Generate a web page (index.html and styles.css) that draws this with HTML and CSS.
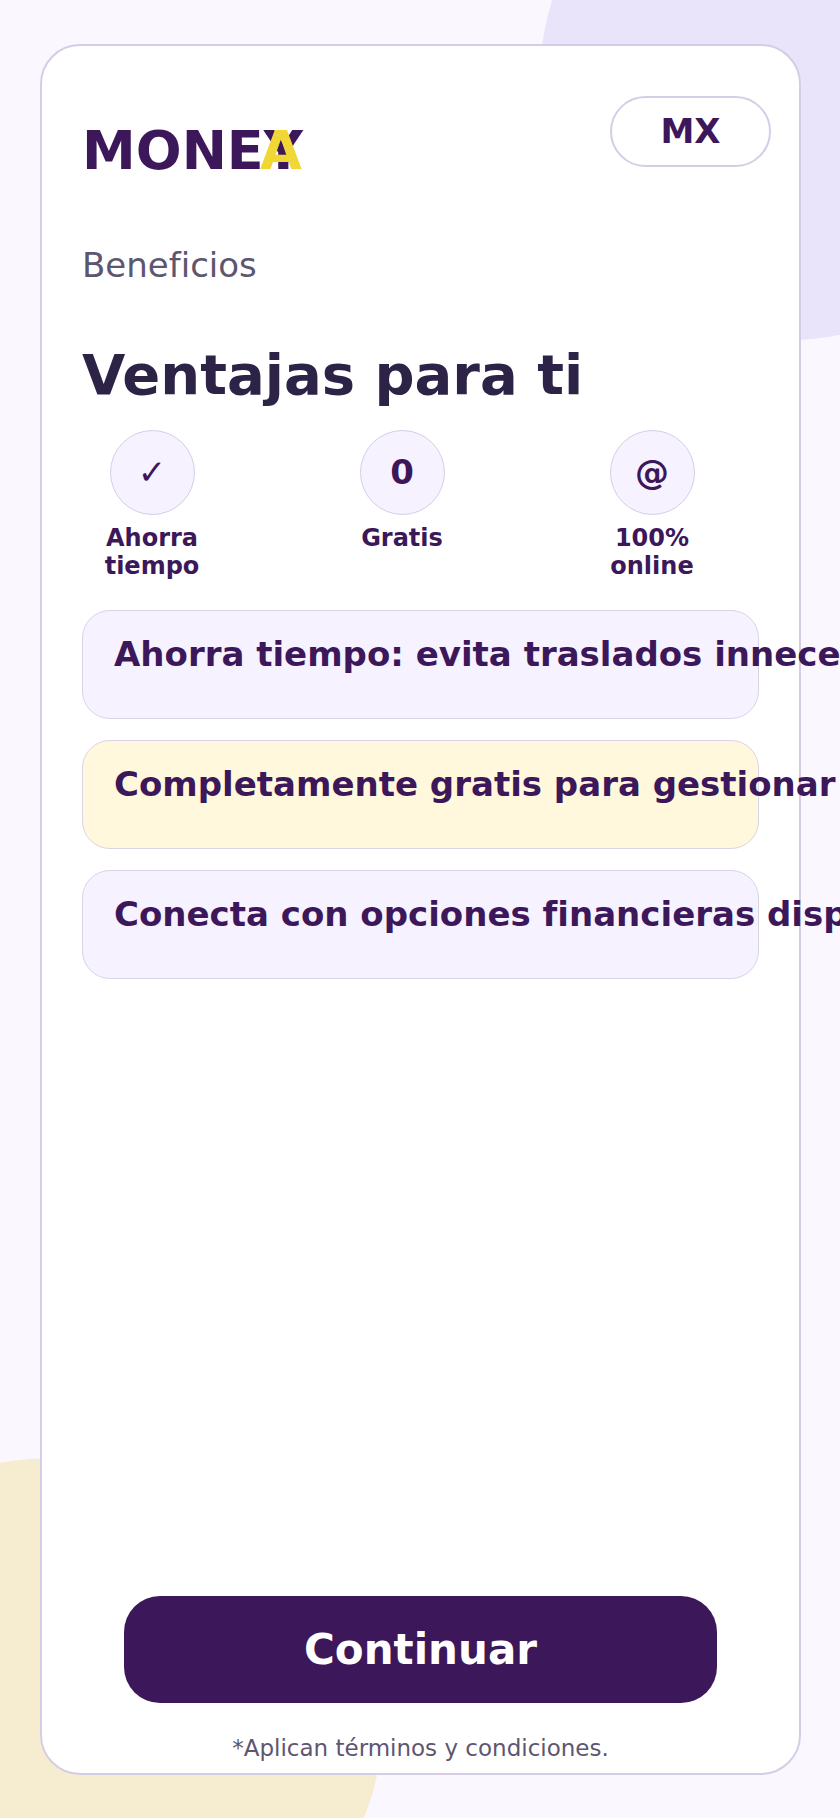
FILE: index.html
```html
<!DOCTYPE html>
<html lang="es">
<head>
<meta charset="utf-8">
<title>Beneficios</title>
<link rel="stylesheet" href="styles.css">
</head>
<body>
<div class="blob blob-top"></div>
<div class="blob blob-bottom"></div>
<main class="card">
  <div class="pill">MX</div>
  <div class="logo">MONEY<span class="logo-a">A</span></div>
  <p class="eyebrow">Beneficios</p>
  <h1 class="title">Ventajas para ti</h1>
  <ul class="perks">
    <li class="perk"><span class="perk-icon perk-check">✓</span><span class="perk-label">Ahorra tiempo</span></li>
    <li class="perk"><span class="perk-icon">0</span><span class="perk-label">Gratis</span></li>
    <li class="perk"><span class="perk-icon">@</span><span class="perk-label">100% online</span></li>
  </ul>
  <div class="notes">
    <div class="note">Ahorra tiempo: evita traslados innecesarios</div>
    <div class="note note-yellow">Completamente gratis para gestionar tu solicitud</div>
    <div class="note">Conecta con opciones financieras disponibles</div>
  </div>
  <button class="cta" type="button">Continuar</button>
  <p class="terms">*Aplican términos y condiciones.</p>
</main>
</body>
</html>
```
FILE: styles.css
```css
* { box-sizing: border-box; }
html, body { margin: 0; height: 1818px; overflow: hidden; }
body {
  position: relative;
  background: #faf7ff;
  font-family: "DejaVu Sans", sans-serif;
  font-feature-settings: "liga" 1, "clig" 1;
  text-rendering: optimizeLegibility;
  padding: 44px 39px 0 40px;
}
.blob { position: absolute; border-radius: 50%; }
.blob-top { width: 500px; height: 520px; left: 540px; top: -180px; background: #e9e4f9; }
.blob-bottom { width: 644px; height: 540px; left: -262px; top: 1458px; background: #f6edd0; }
.card {
  position: relative;
  width: 761px;
  height: 1731px;
  background: #fff;
  border: 2px solid #d5cde6;
  border-radius: 40px;
  padding: 0 40px;
  display: flex;
  flex-direction: column;
}
.pill {
  position: absolute;
  top: 50px;
  right: 28px;
  width: 161px;
  height: 71px;
  border: 2px solid #d5cde6;
  border-radius: 36px;
  display: flex;
  align-items: center;
  justify-content: center;
  padding-bottom: 1px;
  color: #3c1759;
  font-size: 34px;
  font-weight: 700;
}
.logo {
  position: relative;
  margin-top: 73px;
  font-size: 54px;
  font-weight: 700;
  line-height: 63px;
  color: #3c1759;
}
.logo-a { position: absolute; left: 178px; top: 0; color: #f0d736; }
.eyebrow {
  margin: 63px 0 0;
  font-size: 34px;
  line-height: 40px;
  color: #5d5670;
}
.title {
  margin: 57px 0 0;
  font-size: 56px;
  line-height: 66px;
  font-weight: 700;
  color: #2d2347;
}
.perks {
  list-style: none;
  margin: 22px 0 0;
  padding: 0;
  display: grid;
  grid-template-columns: repeat(3, 140px);
  column-gap: 110px;
}
.perk { display: flex; flex-direction: column; align-items: center; gap: 9px; }
.perk-icon {
  width: 85px;
  height: 85px;
  border: 1px solid #d5cde6;
  border-radius: 50%;
  background: #f6f2ff;
  display: flex;
  align-items: center;
  justify-content: center;
  padding-bottom: 1px;
  color: #3c1759;
  font-size: 34px;
  font-weight: 700;
}
.perk-label {
  font-size: 24px;
  line-height: 28px;
  font-weight: 700;
  text-align: center;
  color: #3c1759;
}
.notes { margin-top: 30px; display: flex; flex-direction: column; gap: 21px; }
.note {
  height: 109px;
  padding: 23px 31px 0;
  border: 1px solid #d9d3e6;
  border-radius: 28px;
  background: #f6f2ff;
  color: #3c1759;
  font-size: 34px;
  line-height: 40px;
  font-weight: 700;
  white-space: nowrap;
}
.note-yellow { background: #fff8dc; }
.cta {
  margin: auto 42px 0;
  height: 107px;
  border: 0;
  border-radius: 36px;
  background: #3c1759;
  color: #fff;
  font-family: inherit;
  font-size: 42px;
  font-weight: 700;
}
.terms {
  margin: 31px 0 11px;
  text-align: center;
  font-size: 23px;
  line-height: 28px;
  color: #5d5670;
}
```
